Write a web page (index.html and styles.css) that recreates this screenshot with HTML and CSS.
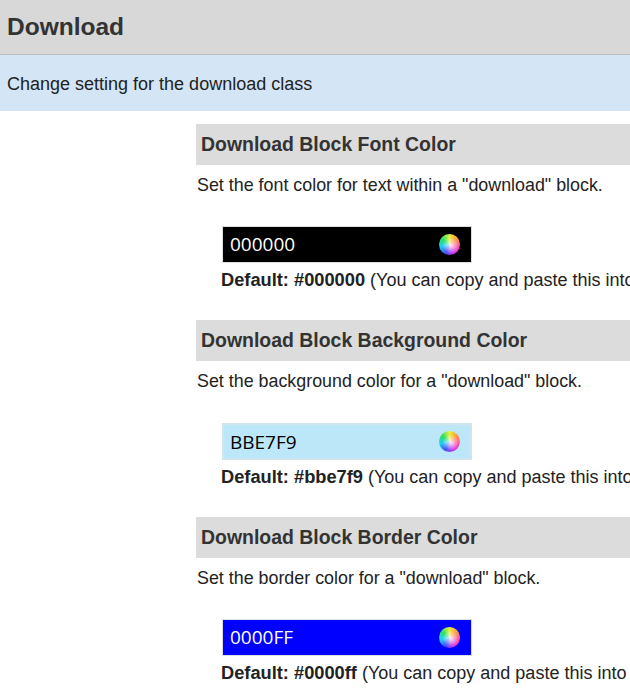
FILE: index.html
```html
<!DOCTYPE html>
<html lang="en">
<head>
    <meta charset="UTF-8">
    <meta name="viewport" content="width=device-width, initial-scale=1.0">
    <title>Download</title>
    <link rel="stylesheet" href="styles.css">
</head>
<body>
    <h1 class="page-title">Download</h1>
    <p class="notice">Change setting for the download class</p>

    <div class="settings">
        <div class="setting">
            <h3>Download Block Font Color</h3>
            <p class="setting-desc">Set the font color for text within a "download" block.</p>
            <div class="color-field field-black">
                <span>000000</span>
                <span class="color-wheel"></span>
            </div>
            <p class="setting-default"><b>Default: #000000</b> (You can copy and paste this into your stylesheet)</p>
        </div>

        <div class="setting">
            <h3>Download Block Background Color</h3>
            <p class="setting-desc">Set the background color for a "download" block.</p>
            <div class="color-field field-light">
                <span>BBE7F9</span>
                <span class="color-wheel"></span>
            </div>
            <p class="setting-default"><b>Default: #bbe7f9</b> (You can copy and paste this into your stylesheet)</p>
        </div>

        <div class="setting">
            <h3>Download Block Border Color</h3>
            <p class="setting-desc">Set the border color for a "download" block.</p>
            <div class="color-field field-blue">
                <span>0000FF</span>
                <span class="color-wheel"></span>
            </div>
            <p class="setting-default"><b>Default: #0000ff</b> (You can copy and paste this into your stylesheet)</p>
        </div>
    </div>
</body>
</html>
```

FILE: styles.css
```css
html, body {
    height: 100%;
}

body {
    margin: 0;
    overflow: hidden;
    font-family: "Liberation Sans", Arial, sans-serif;
    font-size: 18px;
    color: #222;
    background-color: white;
}

.page-title {
    margin: 0;
    height: 54px;
    padding-left: 7px;
    font-size: 24.5px;
    line-height: 53px;
    color: #333;
    background-color: #d8d8d8;
    border-bottom: 1px solid #bbb;
}

.notice {
    margin: 0;
    height: 56px;
    padding-left: 7px;
    line-height: 58px;
    color: #222;
    background-color: #d4e6f5;
}

.settings {
    margin: 12.9px 0 0 196px;
    white-space: nowrap;
}

.setting {
    height: 196.5px;
}

.setting h3 {
    margin: 0;
    height: 41px;
    padding-left: 5px;
    font-size: 19.45px;
    line-height: 41px;
    color: #333;
    background-color: #dcdcdc;
}

.setting-desc {
    margin: 0;
    padding: 11px 0 0 1px;
    font-size: 17.87px;
    line-height: 18px;
}

.color-field {
    box-sizing: border-box;
    display: flex;
    justify-content: space-between;
    align-items: center;
    width: 250px;
    height: 37px;
    margin: 32px 0 0 26px;
    padding: 0 11px 0 7px;
    border: 1px solid #ddd;
    font-family: "Open Sans", sans-serif;
    font-size: 19px;
}

.field-black {
    color: white;
    background-color: #000;
}

.field-light {
    margin-top: 33px;
    color: #000;
    background-color: #bbe7f9;
    border: 2px solid #d0e4ec;
    padding-left: 6px;
    padding-right: 10px;
}

.field-blue {
    color: white;
    background-color: #00f;
}

.color-wheel {
    width: 21px;
    height: 21px;
    border-radius: 50%;
    filter: blur(0.5px);
    background:
        radial-gradient(circle at 55% 55%, rgba(255, 255, 255, 0.9), rgba(255, 255, 255, 0) 50%),
        conic-gradient(#e8f040, #ff9a40, #ff50a0, #d030f0, #4050ff, #20d0f0, #30e060, #e8f040);
}

.setting-default {
    margin: 0;
    margin-left: 25px;
    padding-top: 8px;
    line-height: 18px;
}

.setting-default b {
    font-size: 18.25px;
}
```
